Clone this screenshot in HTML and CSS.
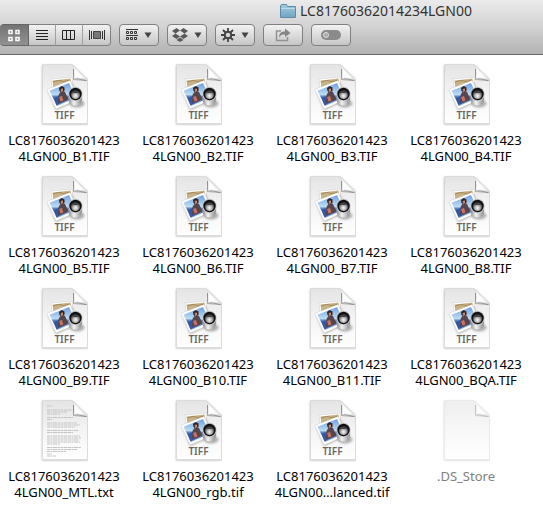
FILE: index.html
```
<!DOCTYPE html>
<html lang="en">
<head>
<meta charset="utf-8">
<title>LC81760362014234LGN00</title>
<link rel="stylesheet" href="styles.css">
</head>
<body>
<svg class="defs" width="0" height="0" aria-hidden="true">
  <defs>
    <linearGradient id="paper" x1="0" y1="0" x2="0" y2="1"><stop offset="0" stop-color="#e4e4e4"/><stop offset=".5" stop-color="#f4f4f4"/><stop offset="1" stop-color="#fff"/></linearGradient>
    <linearGradient id="curl" x1="0" y1="1" x2="1" y2="0"><stop offset="0" stop-color="#fff"/><stop offset=".4" stop-color="#fff"/><stop offset=".6" stop-color="#d0d0d0"/></linearGradient>
    <linearGradient id="sky" x1="0" y1="0" x2="0" y2="1"><stop offset="0" stop-color="#6f9fdd"/><stop offset=".5" stop-color="#bcdcf6"/><stop offset=".6" stop-color="#4a78bd"/><stop offset="1" stop-color="#86aede"/></linearGradient>
    <linearGradient id="metal" x1="0" y1="0" x2="1" y2="0"><stop offset="0" stop-color="#888"/><stop offset=".4" stop-color="#f4f4f4"/><stop offset="1" stop-color="#888"/></linearGradient>
    <radialGradient id="lens" cx=".5" cy=".65" r=".6"><stop offset="0" stop-color="#fff"/><stop offset=".5" stop-color="#aaa"/><stop offset="1" stop-color="#222"/></radialGradient>
    <linearGradient id="folder" x1="0" y1="0" x2="0" y2="1"><stop offset="0" stop-color="#a4cbdf"/><stop offset="1" stop-color="#6fa5c1"/></linearGradient>
    <filter id="soft" x="-20%" y="-20%" width="140%" height="140%"><feGaussianBlur stdDeviation=".8"/></filter>
    <symbol id="page" viewBox="0 0 48 64">
      <path d="M2 3H32L48 18V62.500H2Z" fill="#777" opacity=".5" filter="url(#soft)"/>
      <path d="M2.500 2.500H32L47.500 18V61.500H2.500Z" fill="url(#paper)" stroke="#d2d2d2" stroke-width=".5"/>
      <path d="M33.500 7V17.500L46.500 18.500L34 16Z" fill="none" stroke="#666" stroke-width="1" opacity=".5"/>
      <path d="M32 2.500C34.500 5 34.500 10 34 16.500C39 15.500 44 16 47.500 18Z" fill="url(#curl)" stroke="#ccc" stroke-width=".4"/>
    </symbol>
    <symbol id="tiff" viewBox="0 0 48 64">
      <use href="#page"/>
      <path d="M11 17L32 15L33.500 31L13 34Z" fill="#fff" stroke="#ccc" stroke-width=".5"/>
      <path d="M12.500 18.500L30.500 16.500L32 29L14 31Z" fill="#c9b386"/>
      <path d="M13 20l6-1.500 5 1 6-1.500" fill="none" stroke="#a08a5d" stroke-width="1"/>
      <path d="M8 28L31 20L40 37L16 48Z" fill="#555" opacity=".5" filter="url(#soft)"/>
      <path d="M7 27.500L30 18.500L39 37L16 47Z" fill="#fff" stroke="#ccc" stroke-width=".3"/>
      <path d="M9.500 28.700L29 21L36 35.500L17 44Z" fill="url(#sky)"/>
      <path d="M13.500 36l8-3 3 6-8 4.500Z" fill="#3457a4"/>
      <path d="M18 41L18.500 33L21 29L25 30L28.500 37.500L23 40Z" fill="#59444b"/>
      <path d="M19 35l3-1 1.500 4.500-3 1Z" fill="#c77363"/>
      <path d="M19 26l2.500-2 3 1.500v3.500l-2.500 1.500-2.500-1.500Z" fill="#35231f"/>
      <path d="M20.500 27l2.500-.5v2.500l-1.500 1.500Z" fill="#c48c70"/>
      <ellipse cx="37" cy="41.500" rx="7.500" ry="4" fill="#444" opacity=".4" filter="url(#soft)"/>
      <path d="M28.500 35c1 3-1 7 5 8.500s9-2 8.500-9Z" fill="url(#metal)" stroke="#aaa" stroke-width=".4"/>
      <circle cx="35.500" cy="32" r="7.200" fill="#c4c4c4"/>
      <circle cx="35.500" cy="32" r="6.200" fill="#111"/>
      <circle cx="35.500" cy="32.500" r="4.600" fill="url(#lens)"/>
      <path d="M32 30.500Q35.500 26.500 39 30.500Q35.500 31.500 32 30.500" fill="#444"/>
      <text x="24.500" y="57" class="kind">TIFF</text>
    </symbol>
    <symbol id="text" viewBox="0 0 48 64">
      <use href="#page"/>
      <path class="writing" d="M7 8h6M7 12h25M7 14h21M7 16h14M7 19.500h26M7 21.500h6M7 25h30M7 27h33M7 29h28M7 32.500h32M7 34.500h26M7 38h33M7 40h34M7 42h32M7 44h33M7 46h13M7 49.500h34M7 51.500h30M7 53.500h19M7 56h5M7 58h9"/>
    </symbol>
    <symbol id="arrow" viewBox="0 0 8 6"><path d="M.500 .500H7.500L4 6Z" fill="#444"/></symbol>
  </defs>
</svg>

<header class="bar">
  <h1 class="title">
    <svg width="16" height="16" viewBox="0 0 16 16"><path d="M.5 3V14.500H15.500V3.500H7.500L6.500 1.500H1.500Z" fill="url(#folder)" stroke="#5c8ca6"/><path d="M1 5.500H15" stroke="#c0dce9"/></svg>
    <span>LC81760362014234LGN00</span>
  </h1>
  <nav class="tools" aria-label="Toolbar">
    <div class="views">
      <button class="on" aria-label="Icon view"><svg width="14" height="14" viewBox="0 0 14 14"><path d="M2 2.500h3v3H2zM9 2.500h3v3H9zM2 9.500h3v3H2zM9 9.500h3v3H9z" fill="none" stroke="#fff" stroke-width="1.500"/></svg></button>
      <button aria-label="List view"><svg width="12" height="12" viewBox="0 0 12 12"><path d="M0 1.500h12M0 4.500h12M0 7.500h12M0 10.500h12" stroke="#222"/></svg></button>
      <button aria-label="Column view"><svg width="14" height="12" viewBox="0 0 14 12"><path d="M.5 1.500h12v9H.5zM4.500 1v9M8.500 1v9" fill="none" stroke="#222"/></svg></button>
      <button aria-label="Cover flow"><svg width="16" height="12" viewBox="0 0 16 12"><path d="M.5 1v10M2.500 2v8M13.500 2v8M15.500 1v10" stroke="#333"/><path d="M4.500 2.500h7v7h-7z" fill="#777" stroke="#444"/></svg></button>
    </div>
    <button class="tool" aria-label="Arrange"><svg width="12" height="12" viewBox="0 0 12 12"><path d="M0 .5h12M0 6.500h12" stroke="#333"/><path d="M.5 2.500h2v2h-2zM4.500 2.500h2v2h-2zM8.500 2.500h2v2h-2zM.5 8.500h2v2h-2zM4.500 8.500h2v2h-2zM8.500 8.500h2v2h-2z" fill="none" stroke="#333"/></svg><svg width="8" height="6"><use href="#arrow"/></svg></button>
    <button class="tool" aria-label="Dropbox"><svg width="16" height="14" viewBox="0 0 16 14"><path d="M4.500 0L8 2.500 3.500 5.500 0 3ZM11.500 0L16 3 12.500 5.500 8 2.500ZM3.500 5.500L8 8.500 4.500 11 0 8ZM12.500 5.500L16 8 11.500 11 8 8.500ZM8 9.500L11.500 12 8 14 4.500 12Z" fill="#5a5a5a"/></svg><svg width="8" height="6"><use href="#arrow"/></svg></button>
    <button class="tool" aria-label="Action"><svg width="14" height="14" viewBox="0 0 14 14"><path d="M7 0v14M0 7h14M2 2l10 10M12 2L2 12" stroke="#444" stroke-width="1.800"/><circle cx="7" cy="7" r="3.300" fill="#d5d5d5" stroke="#444" stroke-width="2"/></svg><svg width="8" height="6"><use href="#arrow"/></svg></button>
    <button class="tool" aria-label="Share"><svg width="16" height="14" viewBox="0 0 16 14"><path d="M6 3H1.500V12.500H12.500V9" fill="none" stroke="#929292" stroke-width="1.500"/><path d="M4 9.500C4 5 6.500 3.500 10 3.500V.5L15.500 5 10 9V6.500C7 6.500 5.500 7 4 9.500Z" fill="#858585"/></svg></button>
    <button class="tool" aria-label="Tags"><svg width="20" height="10" viewBox="0 0 20 10"><rect width="20" height="10" rx="5" fill="#8b8b8b"/><circle cx="5" cy="5" r="2.500" fill="#aaa" stroke="#e0e0e0"/></svg></button>
  </nav>
</header>

<main class="files">
  <figure><svg class="icon"><use href="#tiff"/></svg><figcaption>LC8176036201423<br>4LGN00_B1.TIF</figcaption></figure>
  <figure><svg class="icon"><use href="#tiff"/></svg><figcaption>LC8176036201423<br>4LGN00_B2.TIF</figcaption></figure>
  <figure><svg class="icon"><use href="#tiff"/></svg><figcaption>LC8176036201423<br>4LGN00_B3.TIF</figcaption></figure>
  <figure><svg class="icon"><use href="#tiff"/></svg><figcaption>LC8176036201423<br>4LGN00_B4.TIF</figcaption></figure>
  <figure><svg class="icon"><use href="#tiff"/></svg><figcaption>LC8176036201423<br>4LGN00_B5.TIF</figcaption></figure>
  <figure><svg class="icon"><use href="#tiff"/></svg><figcaption>LC8176036201423<br>4LGN00_B6.TIF</figcaption></figure>
  <figure><svg class="icon"><use href="#tiff"/></svg><figcaption>LC8176036201423<br>4LGN00_B7.TIF</figcaption></figure>
  <figure><svg class="icon"><use href="#tiff"/></svg><figcaption>LC8176036201423<br>4LGN00_B8.TIF</figcaption></figure>
  <figure><svg class="icon"><use href="#tiff"/></svg><figcaption>LC8176036201423<br>4LGN00_B9.TIF</figcaption></figure>
  <figure><svg class="icon"><use href="#tiff"/></svg><figcaption>LC8176036201423<br>4LGN00_B10.TIF</figcaption></figure>
  <figure><svg class="icon"><use href="#tiff"/></svg><figcaption>LC8176036201423<br>4LGN00_B11.TIF</figcaption></figure>
  <figure><svg class="icon"><use href="#tiff"/></svg><figcaption>LC8176036201423<br>4LGN00_BQA.TIF</figcaption></figure>
  <figure><svg class="icon"><use href="#text"/></svg><figcaption>LC8176036201423<br>4LGN00_MTL.txt</figcaption></figure>
  <figure><svg class="icon"><use href="#tiff"/></svg><figcaption>LC8176036201423<br>4LGN00_rgb.tif</figcaption></figure>
  <figure><svg class="icon"><use href="#tiff"/></svg><figcaption>LC8176036201423<br>4LGN00…lanced.tif</figcaption></figure>
  <figure class="hidden-file"><svg class="icon"><use href="#page"/></svg><figcaption>.DS_Store</figcaption></figure>
</main>
</body>
</html>
```
FILE: styles.css
```
* { box-sizing: border-box; }
body {
  margin: 0;
  background: #fff;
  color: #000;
  font-family: "Lucida Grande", "Noto Sans", sans-serif;
  font-size: 13px;
  line-height: 16px;
}
.defs { position: absolute; }
.bar {
  height: 55px;
  background: linear-gradient(#ebebeb, #d2d2d2 50%, #b2b2b2);
  border-bottom: 1px solid #686868;
}
.title {
  display: flex;
  align-items: center;
  gap: 4px;
  height: 22px;
  margin: 0;
  padding-left: 280px;
  font-size: 14px;
  font-weight: 400;
  color: #333;
  white-space: nowrap;
}
.tools { display: flex; gap: 8px; padding-top: 2px; }
button {
  display: flex;
  align-items: center;
  justify-content: center;
  gap: 6px;
  height: 22px;
  padding: 0;
  border: 1px solid #808080;
  background: linear-gradient(#f2f2f2, #c6c6c6);
}
.tool { width: 40px; border-radius: 4px; }
.views { display: flex; }
.views button { width: 27px; border-left-width: 0; border-right-color: #a0a0a0; }
.views button:last-child { width: 28px; border-right-color: #808080; border-radius: 0 4px 4px 0; }
.views .on {
  width: 29px;
  border-color: #666;
  border-radius: 4px 0 0 4px;
  background: linear-gradient(#737373, #919191);
}
.files {
  display: grid;
  grid-template-columns: repeat(auto-fill, 114px);
  gap: 10px 20px;
  padding: 7px 7px 10px;
}
figure {
  display: flex;
  flex-direction: column;
  align-items: center;
  gap: 6px;
  height: 102px;
  margin: 0;
}
.icon { width: 48px; height: 64px; flex: none; }
figcaption { text-align: center; white-space: nowrap; }
.kind {
  font-family: "Noto Sans", sans-serif;
  font-size: 10px;
  font-weight: 600;
  fill: #666;
  text-anchor: middle;
}
.writing { fill: none; stroke: #c4c4c4; stroke-width: 1; stroke-dasharray: 3 .5 2 .5 4 .5; }
.hidden-file .icon { opacity: .6; }
.hidden-file figcaption { color: #808080; }
```
